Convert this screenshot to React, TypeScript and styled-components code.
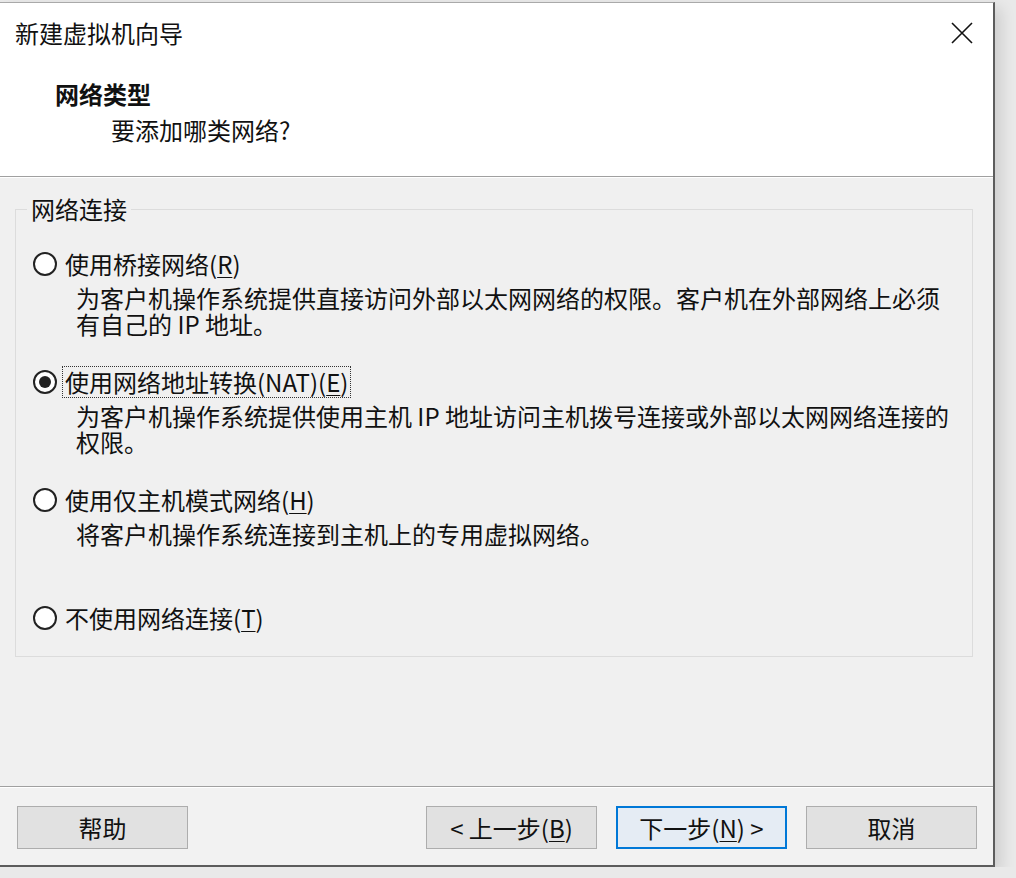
import React from 'react'
import styled, { createGlobalStyle } from 'styled-components'

const GlobalStyle = createGlobalStyle`
  html, body {
    margin: 0;
    padding: 0;
    background-color: #e9e9e9;
  }
  body {
    font-family: "Noto Sans CJK SC", "Noto Sans", sans-serif;
    color: #111;
  }
`

const Window = styled.div`
  width: 993px;
  height: 862px;
  margin-top: 2px;
  display: flex;
  flex-direction: column;
  background-color: #f0f0f0;
  border-top: 1px solid #a9a9a9;
  border-right: 2px solid #5c5c5c;
  border-bottom: 2px solid #5c5c5c;
  box-shadow: 6px 6px 14px rgba(0, 0, 0, 0.12);
`

const Header = styled.header`
  height: 173px;
  background-color: #fff;
  border-bottom: 1px solid #a0a0a0;
  display: flex;
  flex-direction: column;
`

const TitleBar = styled.div`
  height: 60px;
  display: flex;
  align-items: center;
  justify-content: space-between;
  padding: 0 18px 0 15px;
`

const Title = styled.div`
  font-size: 24px;
  line-height: 30px;
`

const CloseButton = styled.div`
  width: 26px;
  height: 26px;
  display: flex;
  align-items: center;
  justify-content: center;
`

const Heading = styled.div`
  margin: 16px 0 0 55px;
  font-size: 24px;
  font-weight: 700;
  line-height: 30px;
`

const SubHeading = styled.div`
  margin: 6px 0 0 111px;
  font-size: 24px;
  line-height: 30px;
`

const Body = styled.main`
  flex: 1;
  padding: 18px 20px 0 15px;
  border-top: 1px solid #fff;
`

const Group = styled.fieldset`
  margin: 0;
  padding: 27px 10px 23px 17px;
  border: 1px solid #dcdcdc;
  min-width: 0;
`

const Legend = styled.legend`
  margin-left: -6px;
  padding: 0 4px;
  font-size: 24px;
  line-height: 26px;
`

const Option = styled.div<{ $first?: boolean }>`
  margin-top: ${p => (p.$first ? 0 : 30)}px;
`

const OptionRow = styled.div`
  display: flex;
  align-items: center;
  height: 30px;
`

const Radio = styled.span<{ $checked?: boolean }>`
  box-sizing: border-box;
  width: 24px;
  height: 24px;
  border-radius: 50%;
  border: 2px solid #222;
  background-color: #fff;
  display: flex;
  align-items: center;
  justify-content: center;
  margin-right: 6px;
  flex-shrink: 0;

  &::after {
    content: '';
    display: ${p => (p.$checked ? 'block' : 'none')};
    width: 12px;
    height: 12px;
    border-radius: 50%;
    background-color: #222;
  }
`

const Label = styled.span<{ $focused?: boolean }>`
  font-size: 24px;
  line-height: 30px;
  padding: 0 2px;
  outline: ${p => (p.$focused ? '1px dotted #333' : 'none')};
  white-space: nowrap;
`

const Key = styled.span`
  text-decoration: underline;
  text-underline-offset: 3px;
  text-decoration-thickness: 1px;
`

const Desc = styled.div`
  margin: 6px 0 0 43px;
  min-height: 52px;
`

const DescLine = styled.div`
  font-size: 24px;
  line-height: 26px;
  white-space: nowrap;
`

const Footer = styled.footer`
  height: 79px;
  border-top: 1px solid #a0a0a0;
  box-shadow: inset 0 1px 0 #fff;
  display: flex;
  align-items: flex-start;
  padding: 19px 16px 0 17px;
  box-sizing: border-box;
  gap: 19px;
  background-color: #f2f2f2;
`

const Spacer = styled.div`
  flex: 1;
`

const Button = styled.button<{ $default?: boolean }>`
  width: 171px;
  height: 43px;
  box-sizing: border-box;
  background-color: ${p => (p.$default ? '#e5ecf4' : '#e1e1e1')};
  border: ${p => (p.$default ? '2px solid #0078d7' : '1px solid #adadad')};
  font-family: "Noto Sans CJK SC", "Noto Sans", sans-serif;
  font-size: 24px;
  color: #111;
  padding: 0;
  display: flex;
  align-items: center;
  justify-content: center;
`

type OptionData = {
  label: React.ReactNode
  desc: string[]
  checked?: boolean
}

const options: OptionData[] = [
  {
    label: <>使用桥接网络(<Key>R</Key>)</>,
    desc: [
      '为客户机操作系统提供直接访问外部以太网网络的权限。客户机在外部网络上必须',
      '有自己的 IP 地址。',
    ],
  },
  {
    label: <>使用网络地址转换(NAT)(<Key>E</Key>)</>,
    desc: [
      '为客户机操作系统提供使用主机 IP 地址访问主机拨号连接或外部以太网网络连接的',
      '权限。',
    ],
    checked: true,
  },
  {
    label: <>使用仅主机模式网络(<Key>H</Key>)</>,
    desc: ['将客户机操作系统连接到主机上的专用虚拟网络。'],
  },
  {
    label: <>不使用网络连接(<Key>T</Key>)</>,
    desc: [],
  },
]

export default function App() {
  return (
    <>
      <GlobalStyle />
      <Window>
        <Header>
          <TitleBar>
            <Title>新建虚拟机向导</Title>
            <CloseButton>
              <svg width="22" height="22" viewBox="0 0 22 22">
                <path d="M1 1 L21 21 M21 1 L1 21" stroke="#111" strokeWidth="1.6" fill="none" />
              </svg>
            </CloseButton>
          </TitleBar>
          <Heading>网络类型</Heading>
          <SubHeading>要添加哪类网络?</SubHeading>
        </Header>
        <Body>
          <Group>
            <Legend>网络连接</Legend>
            {options.map((o, i) => (
              <Option key={i} $first={i === 0}>
                <OptionRow>
                  <Radio $checked={o.checked} />
                  <Label $focused={o.checked}>{o.label}</Label>
                </OptionRow>
                {o.desc.length > 0 && (
                  <Desc>
                    {o.desc.map((line, j) => (
                      <DescLine key={j}>{line}</DescLine>
                    ))}
                  </Desc>
                )}
              </Option>
            ))}
          </Group>
        </Body>
        <Footer>
          <Button>帮助</Button>
          <Spacer />
          <Button>&lt; 上一步(<Key>B</Key>)</Button>
          <Button $default>下一步(<Key>N</Key>) &gt;</Button>
          <Button>取消</Button>
        </Footer>
      </Window>
    </>
  )
}
